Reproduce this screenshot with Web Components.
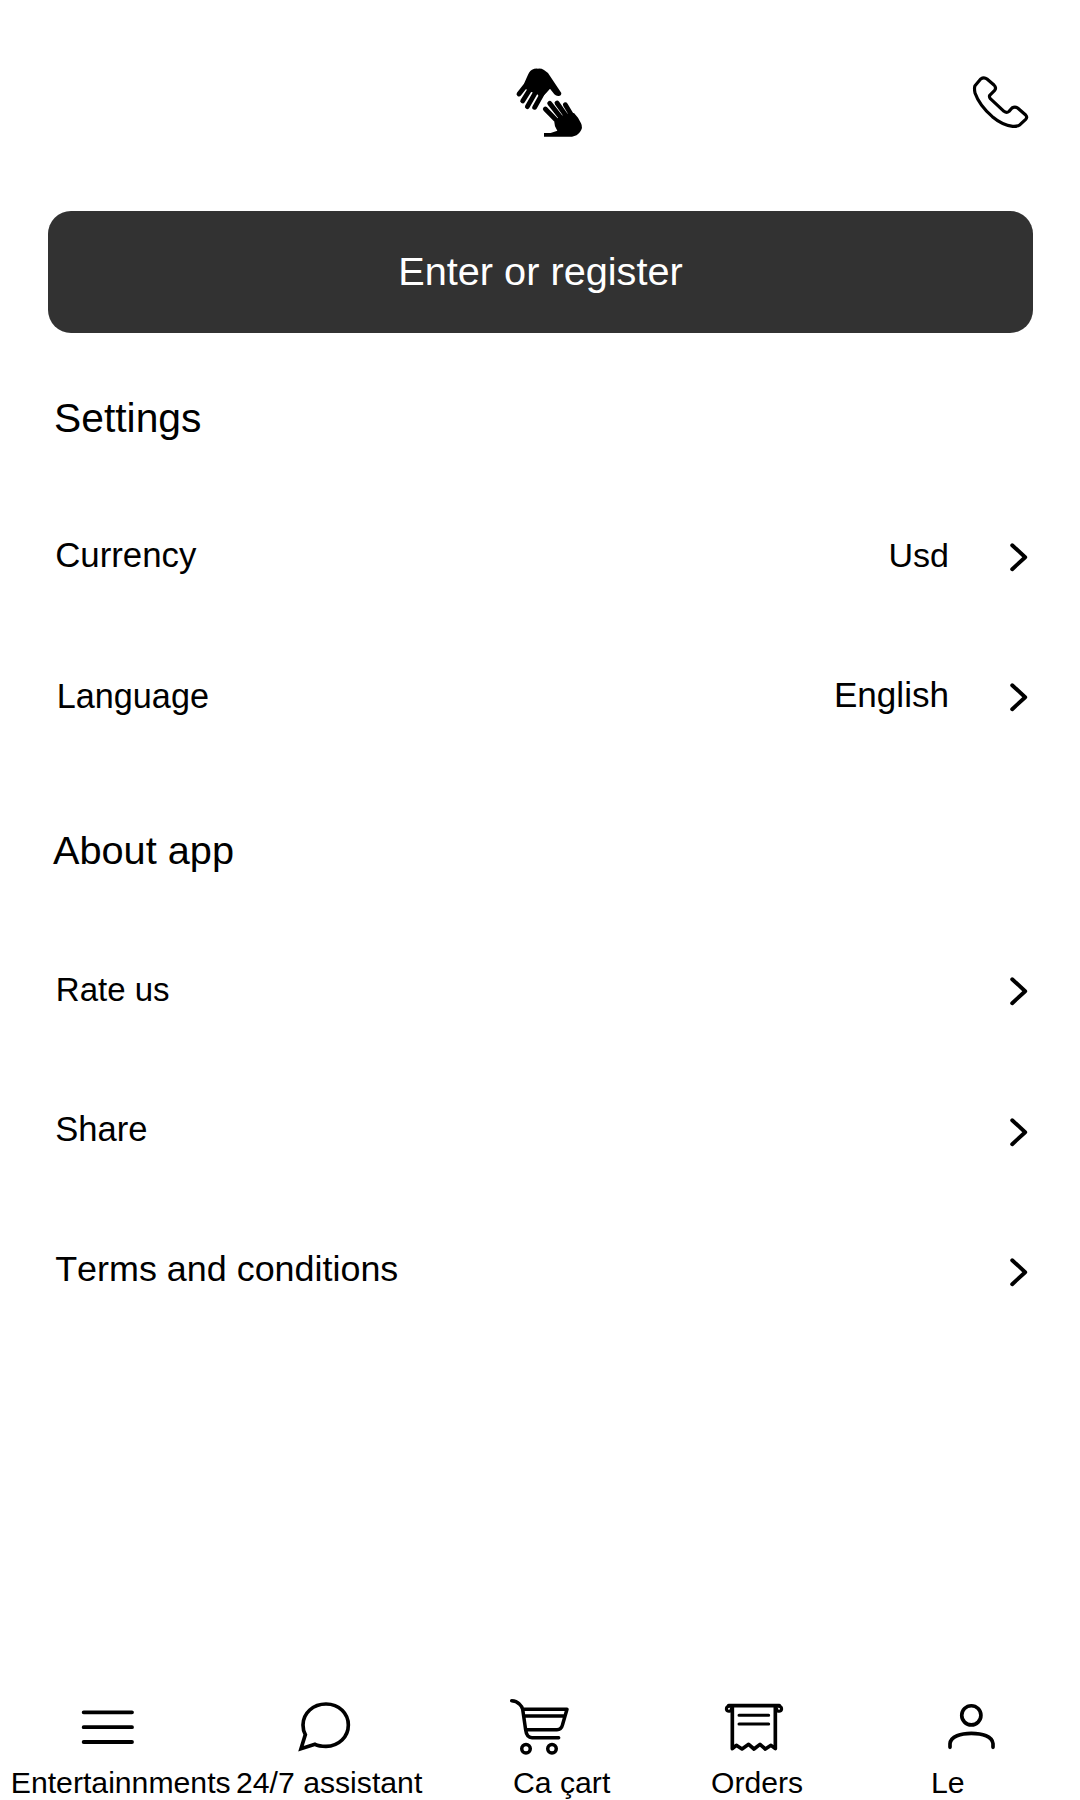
<!DOCTYPE html>
<html lang="en">
<head>
<meta charset="utf-8">
<title>Settings</title>
<style>
body{margin:0;background:#fff;color:#000;font-family:"Liberation Sans",Arial,sans-serif;font-kerning:none}
</style>
</head>
<body>
<settings-screen></settings-screen>
<script>
const define = (name, html) => {
  const template = document.createElement('template');
  template.innerHTML = html;
  customElements.define(name, class extends HTMLElement {
    constructor() {
      super();
      this.attachShadow({mode: 'open'}).append(template.content.cloneNode(true));
    }
  });
};

define('hands-logo', `
<style>:host{display:block;width:100px;height:95px}svg{display:block}</style>
<svg width="100" height="95" viewBox="0 0 300 285" fill="none" stroke="#000" stroke-width="14.500" stroke-linecap="round">
  <path fill="#000" stroke="none" d="M96 44Q104 40 114 41Q124 40 132 45Q143 51 150 63L184 114Q184 123 176 123Q169 124 163 118L150 101L138 115L122 130L112 118L92 110L70 98L74 82L82 64Q87 49 96 44Z"/>
  <path d="M80 88L57 117M92 100L68 138M110 106L82 155M129 112L104 157"/>
  <path fill="#000" stroke="none" d="M132 234H152L172 227L165 214L163 202L176 186L200 176L222 174L234 188L243 205Q250 218 240 231Q231 243 216 245H132Z"/>
  <path d="M178 205L136 162M186 192L149 145M202 188L171 144M218 186L196 149"/>
</svg>`);

define('phone-icon', `
<style>:host{display:block;width:80px;height:75px}svg{display:block}</style>
<svg width="80" height="75" viewBox="0 0 240 225" fill="none" stroke="#000" stroke-width="9.500" stroke-linejoin="round">
  <path d="M62 42Q72 35 81 42L102 60Q110 68 104 76L89 91Q87 96 91 101L132 139Q140 145 147 139L156 129Q165 124 173 129L197 150Q203 157 197 163L180 179Q172 185 158 184Q127 180 97 155Q58 121 45 84Q42 70 45 62Z"/>
</svg>`);

define('primary-button', `
<style>
:host{display:block}
button{display:flex;align-items:center;justify-content:center;box-sizing:border-box;width:100%;height:122px;margin:0;padding:0 0 2px;border:0;border-radius:23px;background:#323232;color:#fff;font:39.7px/46px "Liberation Sans",Arial,sans-serif;font-kerning:none}
</style>
<button><slot></slot></button>`);

define('section-title', `
<style>
:host{display:flex;align-items:center;height:140px;line-height:48px;white-space:nowrap}
h2{font:inherit;margin:var(--nudge,0) 0 0}
</style>
<h2><slot></slot></h2>`);

define('setting-row', `
<style>
:host{display:flex;align-items:center;height:140px;line-height:42px;white-space:nowrap}
.label{flex:1;margin-top:var(--nudge,0)}
.value{margin-top:var(--value-nudge,0);margin-right:59px;display:block}
svg{display:block;margin-top:var(--arrow-nudge,4px)}
</style>
<span class="label"><slot></slot></span>
<span class="value"><slot name="value"></slot></span>
<svg width="21" height="32" viewBox="0 0 21 32" fill="none" stroke="#000" stroke-width="3.900" stroke-linecap="round" stroke-linejoin="round"><path d="M3.200 4.200L16.200 16.200L3.200 28.200"/></svg>`);

define('nav-item', `
<style>
:host{display:flex;flex-direction:column;height:105px;white-space:nowrap;line-height:34px}
.icon{height:60px;margin-left:var(--icon-x,0)}
.text{margin:11px 0 0 var(--text-x,0)}
::slotted(svg){display:block;fill:none;stroke:#000;stroke-linejoin:round;stroke-linecap:round}
</style>
<div class="icon"><slot name="icon"></slot></div>
<div class="text"><slot></slot></div>`);

define('bottom-nav', `
<style>
:host{display:grid;grid-template-columns:236px 254px 210px 200px 180px;height:105px}
</style>
<slot></slot>`);

define('settings-screen', `
<style>
:host{display:flex;flex-direction:column;height:1800px;overflow:hidden}
header{display:flex;justify-content:space-between;align-items:flex-start;height:156px;padding:55px 40px 0 500px}
phone-icon{margin-top:10px}
primary-button{margin:0 47px 12px 48px}
main{flex:1}
section{padding:0 50px 0 0}
section>*{margin-left:var(--x)}
</style>
<header><hands-logo></hands-logo><phone-icon></phone-icon></header>
<primary-button>Enter or register</primary-button>
<main>
  <section>
    <section-title style="--x:54px;--nudge:6px;font-size:40.8px">Settings</section-title>
    <setting-row style="--x:55.2px;font-size:34.800px">Currency<span slot="value" style="font-size:34px;margin-right:1px">Usd</span></setting-row>
    <setting-row style="--x:56.8px;--nudge:2px;font-size:34.2px">Language<span slot="value" style="font-size:35.1px;margin-right:1px">English</span></setting-row>
  </section>
  <section>
    <section-title style="--x:53px;--nudge:16px;font-size:39.7px;height:154px">About app</section-title>
    <setting-row style="--x:55.800px;--nudge:2px;--arrow-nudge:3px;font-size:33px">Rate us</setting-row>
    <setting-row style="--x:55.2px;--arrow-nudge:6px;font-size:34.6px">Share</setting-row>
    <setting-row style="--x:55.2px;--arrow-nudge:5px;font-size:35.9px">Terms and conditions</setting-row>
  </section>
</main>
<bottom-nav>
  <nav-item style="--icon-x:78px;--text-x:10.8px;font-size:30.2px">
    <svg slot="icon" width="60" height="60" viewBox="234 45 180 180" stroke-width="11.500"><path d="M251 97H396M251 141.500H396M251 186H396"/></svg>Entertainnments</nav-item>
  <nav-item style="--icon-x:59px;font-size:30.2px">
    <svg slot="icon" width="60" height="60" viewBox="75 45 180 180" stroke-width="11"><path style="stroke-linejoin:miter" d="M106 164L93 206L135 193Q147 199 168 199C207 199 235 170 235 135C235 101 208 72 168 72C130 72 99 99 99 135Q99 151 106 164Z"/></svg>24/7 assistant</nav-item>
  <nav-item style="--icon-x:15px;--text-x:23px;font-size:30.2px">
    <svg slot="icon" width="65" height="60" viewBox="45 45 195 180" stroke-width="10.500"><path d="M65 62Q79 62 88 72Q97 80 98 88L107 150Q110 173 126 173H206M99 88H231L218 133Q214 149 201 149H108M101 108H224"/><circle cx="108" cy="206" r="12.800"/><circle cx="186" cy="206" r="12.800"/></svg>Ca çart</nav-item>
  <nav-item style="--icon-x:20px;--text-x:11px;font-size:30.1px">
    <svg slot="icon" width="65" height="60" viewBox="60 45 195 180" stroke-width="10"><path stroke-width="11" d="M86 77H238M97 79V206L109 196L126 207L146 193L162 207L180 193L196 207L213 196L226 206V79"/><path d="M117 106H206M117 132H206" stroke-width="9"/><path stroke-width="9" d="M90 78Q79 78 79 87Q80 95 88 94Q94 93 94 86M234 78Q245 78 245 87Q244 95 236 94Q230 93 230 86"/></svg>Orders</nav-item>
  <nav-item style="--icon-x:41px;--text-x:31px;font-size:30.3px">
    <svg slot="icon" width="60" height="60" viewBox="123 45 180 180" stroke-width="11"><circle cx="214" cy="106" r="28.800"/><path d="M150 202V191C152 169 183 160 214 160C247 160 277 169 279 191V202"/></svg>Le</nav-item>
</bottom-nav>`);
</script>
</body>
</html>
